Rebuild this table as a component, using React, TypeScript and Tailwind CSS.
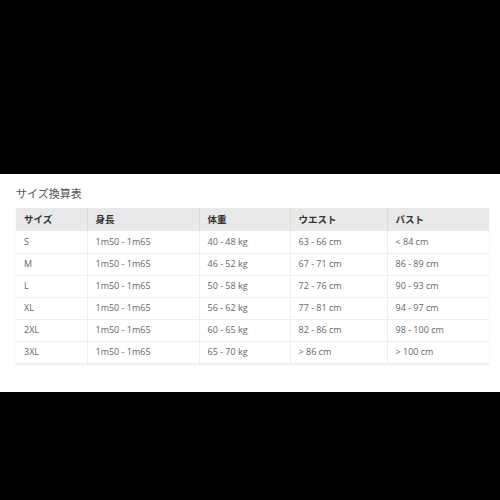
import React from "react";

const rows = [
  ["S", "1m50 - 1m65", "40 - 48 kg", "63 - 66 cm", "< 84 cm"],
  ["M", "1m50 - 1m65", "46 - 52 kg", "67 - 71 cm", "86 - 89 cm"],
  ["L", "1m50 - 1m65", "50 - 58 kg", "72 - 76 cm", "90 - 93 cm"],
  ["XL", "1m50 - 1m65", "56 - 62 kg", "77 - 81 cm", "94 - 97 cm"],
  ["2XL", "1m50 - 1m65", "60 - 65 kg", "82 - 86 cm", "98 - 100 cm"],
  ["3XL", "1m50 - 1m65", "65 - 70 kg", "> 86 cm", "> 100 cm"],
];
const heads = ["サイズ", "身長", "体重", "ウエスト", "バスト"];
const widths = ["w-[71px]", "w-[112px]", "w-[91px]", "w-[97px]", "w-[102px]"];

export default function App() {
  return (
    <div className="w-[500px] h-[500px] bg-black flex flex-col" style={{ fontFamily: '"Open Sans", "Noto Sans CJK JP", sans-serif' }}>
      <div className="h-[174px] shrink-0" />
      <div className="h-[218px] shrink-0 bg-white px-[16px] pt-[12px]">
        <div className="text-[11px] leading-[14px] text-[#555] h-[22px]" style={{ fontFamily: '"Noto Sans CJK JP", sans-serif' }}>サイズ換算表</div>
        <table className="border-collapse w-[473px] table-fixed shadow-[0_1px_2px_rgba(0,0,0,0.08)]">
          <thead>
            <tr className="bg-[#e9e9e9] h-[23px]">
              {heads.map((h, i) => (
                <th key={i} className={`${widths[i]} text-left font-bold text-[9.5px] text-[#333] pl-[8px] border-r border-[#dcdcdc] last:border-r-0`} style={{ fontFamily: '"Noto Sans CJK JP", sans-serif' }}>
                  {h}
                </th>
              ))}
            </tr>
          </thead>
          <tbody>
            {rows.map((r, ri) => (
              <tr key={ri} className="h-[22px] border-b border-[#eeeeee]">
                {r.map((c, ci) => (
                  <td key={ci} className="text-left text-[9px] text-[#666] pl-[8px] border-r border-[#eeeeee] last:border-r-0">
                    {c}
                  </td>
                ))}
              </tr>
            ))}
          </tbody>
        </table>
      </div>
      <div className="flex-1" />
    </div>
  );
}
